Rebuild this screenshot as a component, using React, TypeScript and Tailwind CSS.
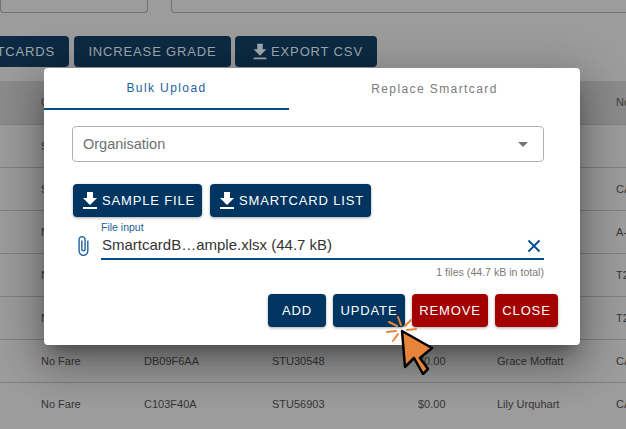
const DownloadIcon = ({className = 'w-[24px] h-[24px]'}: {className?: string}) => (
  <svg viewBox="0 0 24 24" className={`fill-current shrink-0 ${className}`}>
    <path d="M19 9h-4V3H9v6H5l7 7 7-7zM5 18v2h14v-2H5z" />
  </svg>
)

const Btn = ({children, red = false, className = ''}: {children: React.ReactNode; red?: boolean; className?: string}) => (
  <div className={`flex items-center justify-center h-[33px] pt-[1px] rounded-[4px] text-white text-[13px] tracking-[0.85px] whitespace-nowrap shadow-[0_1px_3px_rgba(0,0,0,0.35)] ${red ? 'bg-[#a30000]' : 'bg-[#003561]'} ${className}`}>{children}</div>
)

const BackButton = ({children, className = ''}: {children: React.ReactNode; className?: string}) => (
  <div className={`flex items-center justify-center shrink-0 h-[31px] rounded-[4px] bg-[#0c2a43] text-[#a0a8ae] text-[13px] tracking-[0.85px] whitespace-nowrap ${className}`}>{children}</div>
)

const rows = [
  {fare: 'S', card: '', stu: '', amt: '', name: '', last: ''},
  {fare: 'S', card: '', stu: '', amt: '', name: '', last: 'CA'},
  {fare: 'N', card: '', stu: '', amt: '', name: '', last: 'A-'},
  {fare: 'N', card: '', stu: '', amt: '', name: '', last: 'T2'},
  {fare: 'N', card: '', stu: '', amt: '', name: '', last: 'T2'},
  {fare: 'No Fare', card: 'DB09F6AA', stu: 'STU30548', amt: '$0.00', name: 'Grace Moffatt', last: 'CA'},
  {fare: 'No Fare', card: 'C103F40A', stu: 'STU56903', amt: '$0.00', name: 'Lily Urquhart', last: 'CA'},
]

export default function App() {
  return (
    <div className="relative w-[626px] h-[429px] overflow-hidden bg-[#9c9c9c] font-['Liberation_Sans',Arial,sans-serif]">
      <div className="flex gap-[23px] h-[13px]">
        <div className="w-[148px] border border-t-0 border-[#707070] rounded-b-[4px]"></div>
        <div className="flex-1 -mr-4 border border-t-0 border-[#707070] rounded-b-[4px]"></div>
      </div>

      <div className="flex gap-[5px] mt-[23px] h-[31px] -ml-[30px]">
        <BackButton className="w-[99px] justify-end pr-[14px]">SMARTCARDS</BackButton>
        <BackButton className="w-[157px]">INCREASE GRADE</BackButton>
        <BackButton className="w-[142px] ml-[-1px]"><DownloadIcon className="w-[22px] h-[22px]" />EXPORT CSV</BackButton>
      </div>

      <div className="mt-[14px] bg-[#8b8b8b] h-[43px]">
        <div className="grid grid-cols-[41px_103px_128px_146px_79px_119px_1fr] items-center h-full text-[#3c3c3c] text-[11px] whitespace-nowrap">
          <span></span>
          <span>Grade</span>
          <span></span>
          <span></span>
          <span></span>
          <span></span>
          <span>No</span>
        </div>
      </div>

      {rows.map((row, i) => (
        <div key={i} className="grid grid-cols-[41px_103px_128px_146px_79px_119px_1fr] items-center h-[43px] border-t border-[#7f7f7f] text-[11px] text-[#363636] whitespace-nowrap">
          <span></span>
          <span>{row.fare}</span>
          <span>{row.card}</span>
          <span>{row.stu}</span>
          <span>{row.amt}</span>
          <span>{row.name}</span>
          <span>{row.last}</span>
        </div>
      ))}

      {/* modal */}
      <div className="absolute left-[44px] top-[68px] w-[536px] h-[277px] bg-white rounded-[4px] shadow-[0_11px_15px_-7px_rgba(0,0,0,0.35),0_24px_38px_3px_rgba(0,0,0,0.2),0_9px_46px_8px_rgba(0,0,0,0.18)]">
        <div className="flex h-[42px] text-[12px] tracking-[1.4px]">
          <div className="w-[245px] flex items-center justify-center border-b-2 border-[#004a8f] text-[#1c5f9e]">Bulk Upload</div>
          <div className="flex-1 flex items-center justify-center text-[#7a7a7a]">Replace Smartcard</div>
        </div>

        <div className="mt-[16px] ml-[28px] w-[472px] h-[36px] flex items-center justify-between pl-[10px] pr-[15px] pt-[1px] border border-[#b0b0b0] rounded-[4px] text-[14.5px] text-[#6f6f6f]">
          <span>Organisation</span>
          <span className="w-0 h-0 border-x-[5px] border-x-transparent border-t-[5px] border-t-[#757575]"></span>
        </div>

        <div className="flex gap-[8px] mt-[22px] ml-[29px]">
          <Btn className="w-[129px] pr-[2px]"><DownloadIcon />SAMPLE FILE</Btn>
          <Btn className="w-[161px] pr-[2px]"><DownloadIcon />SMARTCARD LIST</Btn>
        </div>

        <div className="flex mt-[5px] ml-[28px] w-[472px]">
          <svg viewBox="0 0 24 24" className="w-[22px] h-[22px] mt-[13px] fill-[#1c5f9e] shrink-0">
            <path d="M16.5 6v11.5c0 2.21-1.79 4-4 4s-4-1.79-4-4V5c0-1.38 1.12-2.5 2.5-2.5s2.5 1.12 2.5 2.5v10.5c0 .55-.45 1-1 1s-1-.45-1-1V6H10v9.5c0 1.38 1.12 2.5 2.5 2.5s2.5-1.12 2.5-2.5V5c0-2.21-1.79-4-4-4S7 2.79 7 5v12.5c0 3.04 2.46 5.5 5.5 5.5s5.5-2.46 5.5-5.5V6h-1.5z" />
          </svg>
          <div className="flex-1 ml-[7px]">
            <div className="text-[10.5px] leading-[11px] text-[#1c5f9e]">File input</div>
            <div className="flex items-center justify-between h-[27px] border-b-2 border-[#004a8f] text-[15px] text-[#333333]">
              <span className="ml-[1px]">SmartcardB…ample.xlsx (44.7 kB)</span>
              <svg viewBox="0 0 14 14" className="w-[14px] h-[14px] mr-[3px] stroke-[#004a8f] fill-none" strokeWidth="1.8"><path d="M1.5 1.5l11 11M12.5 1.5l-11 11" /></svg>
            </div>
            <div className="text-right text-[10.6px] leading-[12px] mt-[6px] text-[#7a7a7a]">1 files (44.7 kB in total)</div>
          </div>
        </div>

        <div className="flex justify-end gap-[7px] mt-[16px] mr-[22px]">
          <Btn className="w-[58px]">ADD</Btn>
          <Btn className="w-[72px]">UPDATE</Btn>
          <Btn red className="w-[76px]">REMOVE</Btn>
          <Btn red className="w-[63px]">CLOSE</Btn>
        </div>
      </div>

      {/* click cursor */}
      <svg viewBox="0 0 50 60" className="absolute left-[385px] top-[315px] w-[50px] h-[60px]">
        <g stroke="#e8833a" strokeWidth="2" strokeLinecap="round">
          <path d="M4 7l8 4M13 2l3 8M26 5l-6 6M31 14l-9 1M2 17l9-1M8 26l5-7" />
        </g>
        <path d="M17 16l3 36 9-9 9 16 5-5-8-11 12-10z" fill="#e8833a" stroke="#000" strokeWidth="2.5" strokeLinejoin="round" />
      </svg>
    </div>
  )
}
